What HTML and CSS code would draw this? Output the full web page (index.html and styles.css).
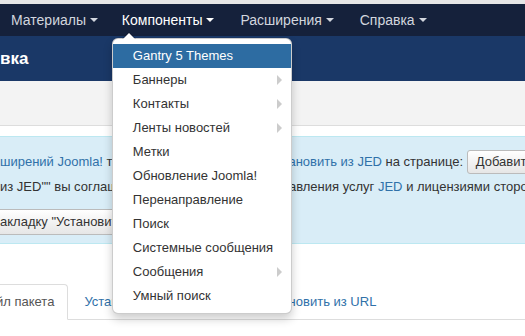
FILE: index.html
```html
<!DOCTYPE html>
<html lang="ru">
<head>
  <meta charset="UTF-8" />
  <title>Менеджер расширений: Установка</title>
  <link rel="stylesheet" href="styles.css">
</head>
<body>

<div class="topstrip"></div>

<nav class="navbar">
  <ul class="nav">
    <li><a href="#">Материалы <b class="caret"></b></a></li>
    <li class="open">
      <a href="#">Компоненты <b class="caret"></b></a>
      <ul class="dropdown-menu">
        <li class="active"><a href="#">Gantry 5 Themes</a></li>
        <li class="sub"><a href="#">Баннеры</a></li>
        <li class="sub"><a href="#">Контакты</a></li>
        <li class="sub"><a href="#">Ленты новостей</a></li>
        <li><a href="#">Метки</a></li>
        <li><a href="#">Обновление Joomla!</a></li>
        <li><a href="#">Перенаправление</a></li>
        <li><a href="#">Поиск</a></li>
        <li><a href="#">Системные сообщения</a></li>
        <li class="sub"><a href="#">Сообщения</a></li>
        <li><a href="#">Умный поиск</a></li>
      </ul>
    </li>
    <li><a href="#">Расширения <b class="caret"></b></a></li>
    <li><a href="#">Справка <b class="caret"></b></a></li>
  </ul>
</nav>

<header class="header">
  <h1 class="page-title">вка</h1>
</header>

<div class="subhead"></div>

<div class="content">
  <div class="alert">
    <p><a href="#">ширений Joomla!</a> теперь можно на вкладке "Уст<a href="#">ановить из JED</a> на странице:
      <button class="btn">Добавить вкладку</button>
    </p>
    <p>из JED"" вы соглашаетесь с условиями предоставления услуг <a href="#">JED</a> и лицензиями сторонних расширений.</p>
    <p><button class="btn btn-wide">акладку "Установить из JED"</button></p>
  </div>

  <ul class="tabs">
    <li class="active"><a href="#">йл пакета</a></li>
    <li><a href="#">Установить из каталога</a></li>
    <li><a href="#">Установить из URL</a></li>
  </ul>
</div>

</body>
</html>
```

FILE: styles.css
```css
html, body {
  margin: 0;
  padding: 0;
}
body {
  width: 525px;
  height: 336px;
  overflow: hidden;
  font-family: "Liberation Sans", Arial, sans-serif;
  font-size: 13px;
  color: #333;
  background: #fff;
}
a {
  text-decoration: none;
}
ul {
  list-style: none;
  margin: 0;
  padding: 0;
}

.topstrip {
  height: 4px;
  background: #e6e6e6;
}

/* navbar */
.navbar {
  height: 32px;
  background: #15213b;
}
.nav {
  display: flex;
  height: 100%;
}
.nav > li {
  position: relative;
}
.nav > li > a {
  display: flex;
  align-items: center;
  height: 32px;
  padding: 0 15px 0 11px;
  font-size: 14px;
  color: #d2d6de;
  white-space: pre;
}
.nav > li:first-child > a {
  padding-right: 13px;
}
.nav > li.open > a {
  color: #fff;
}
.caret {
  display: inline-block;
  border-top: 4px solid #d2d6de;
  border-left: 4px solid transparent;
  border-right: 4px solid transparent;
}
.open .caret {
  border-top-color: #fff;
}

/* dropdown */
.dropdown-menu {
  position: absolute;
  top: 34px;
  left: 1px;
  z-index: 10;
  width: 178px;
  padding: 5px 0;
  background: #fff;
  border: 1px solid rgba(0, 0, 0, 0.2);
  border-radius: 6px;
  box-shadow: 0 5px 10px rgba(0, 0, 0, 0.2);
}
.dropdown-menu::before {
  content: "";
  position: absolute;
  top: -7px;
  left: 9px;
  border-left: 7px solid transparent;
  border-right: 7px solid transparent;
  border-bottom: 7px solid rgba(0, 0, 0, 0.2);
}
.dropdown-menu::after {
  content: "";
  position: absolute;
  top: -6px;
  left: 10px;
  border-left: 6px solid transparent;
  border-right: 6px solid transparent;
  border-bottom: 6px solid #fff;
}
.dropdown-menu li {
  position: relative;
}
.dropdown-menu a {
  display: block;
  padding: 3px 20px;
  line-height: 18px;
  color: #333;
  white-space: nowrap;
}
.dropdown-menu .active a {
  background: #2d6ca2;
  color: #fff;
}
.dropdown-menu .sub::after {
  content: "";
  position: absolute;
  right: 9px;
  top: 7px;
  border-top: 5px solid transparent;
  border-bottom: 5px solid transparent;
  border-left: 5px solid #ccc;
}

/* header */
.header {
  height: 45px;
  background: #1a3867;
  display: flex;
  align-items: center;
}
.page-title {
  margin: 0;
  font-size: 17px;
  font-weight: bold;
  color: #fff;
}

.subhead {
  height: 44px;
  background: #f3f3f3;
  border-bottom: 1px solid #ddd;
}

/* content */
.content {
  padding-top: 10px;
}
.alert {
  background: #d9edf7;
  border-top: 1px solid #bce8f1;
  border-bottom: 1px solid #bce8f1;
  padding: 12px 0 8px;
  white-space: nowrap;
  overflow: hidden;
}
.alert p {
  margin: 0;
  line-height: 25px;
}
.alert a {
  color: #3071a9;
}
.btn {
  font-family: inherit;
  font-size: 13px;
  color: #333;
  padding: 3px 8px;
  line-height: 16px;
  background: linear-gradient(#fff, #e6e6e6);
  border: 1px solid #bbb;
  border-radius: 3px;
}
.btn-wide {
  margin-top: 10px;
  padding: 4px 2px 4px 0;
  border-left: 0;
  border-radius: 0 3px 3px 0;
}

/* tabs */
.tabs {
  display: flex;
  margin-top: 40px;
  border-bottom: 1px solid #ddd;
}
.tabs li {
  margin-right: 2px;
  margin-bottom: -1px;
}
.tabs a {
  display: block;
  padding: 8px 13px;
  line-height: 18px;
  color: #3071a9;
  border: 1px solid transparent;
  border-radius: 4px 4px 0 0;
}
.tabs li + li + li a {
  padding-left: 19px;
}
.tabs .active a {
  margin-left: -5px;
  padding-left: 0;
  color: #555;
  background: #fff;
  border-color: #ddd #ddd transparent transparent;
  border-radius: 0 4px 0 0;
}
```
